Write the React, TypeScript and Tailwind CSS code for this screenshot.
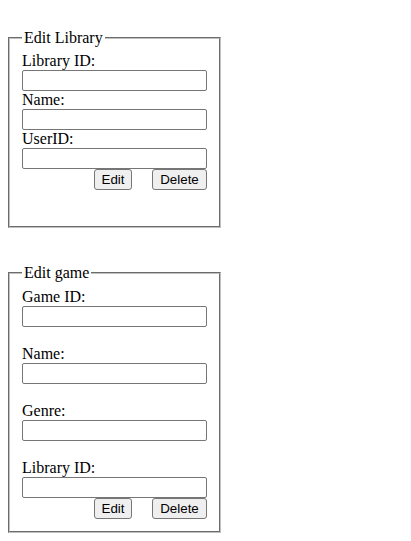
import { useState } from 'react'

type Field = { id: string; label: string }

const libraryFields: Field[] = [
  { id: 'libraryId', label: 'Library ID:' },
  { id: 'name', label: 'Name:' },
  { id: 'userId', label: 'UserID:' },
]

const gameFields: Field[] = [
  { id: 'gameId', label: 'Game ID:' },
  { id: 'gameName', label: 'Name:' },
  { id: 'genre', label: 'Genre:' },
  { id: 'gameLibraryId', label: 'Library ID:' },
]

function TextInput({ value, onChange }: { value: string; onChange: (v: string) => void }) {
  return (
    <input
      type="text"
      value={value}
      onChange={(e) => onChange(e.target.value)}
      className="block w-full h-[21px] px-[2px] border border-[#767676] rounded-[2px] bg-white text-[13.33px] outline-none"
    />
  )
}

function Buttons() {
  return (
    <div className="flex justify-end gap-[20px]">
      <button
        type="button"
        className="w-[38px] h-[21px] border border-[#767676] rounded-[3px] bg-[#efefef] text-[13.33px] leading-none text-black font-['Liberation_Sans',Arial,sans-serif]"
      >
        Edit
      </button>
      <button
        type="button"
        className="w-[55px] h-[21px] border border-[#767676] rounded-[3px] bg-[#efefef] text-[13.33px] leading-none text-black font-['Liberation_Sans',Arial,sans-serif]"
      >
        Delete
      </button>
    </div>
  )
}

export default function App() {
  const [values, setValues] = useState<Record<string, string>>({})
  const set = (id: string) => (v: string) => setValues((prev) => ({ ...prev, [id]: v }))

  return (
    <div className="min-h-[541px] bg-white pt-[29px] pl-[8px] text-black text-[16px] font-['Liberation_Serif','Times_New_Roman',serif]">
      <form onSubmit={(e) => e.preventDefault()}>
        <fieldset className="w-[213px] border-2 [border-style:groove] border-[#c0c0c0] px-[12px] pt-[5px] pb-[10px]">
          <legend className="px-[2px] leading-[18px]">Edit Library</legend>
          {libraryFields.map((f) => (
            <div key={f.id}>
              <label htmlFor={f.id} className="block h-[18px] leading-[18px]">
                {f.label}
              </label>
              <TextInput value={values[f.id] ?? ''} onChange={set(f.id)} />
            </div>
          ))}
          <Buttons />
          <div className="h-[26px]" />
        </fieldset>
      </form>

      <form onSubmit={(e) => e.preventDefault()} className="mt-[36px]">
        <fieldset className="w-[213px] border-2 [border-style:groove] border-[#c0c0c0] px-[12px] pt-[6px] pb-[12px]">
          <legend className="px-[2px] leading-[18px]">Edit game</legend>
          {gameFields.map((f, i) => (
            <div key={f.id} className={i > 0 ? 'mt-[18px]' : ''}>
              <label htmlFor={f.id} className="block h-[18px] leading-[18px]">
                {f.label}
              </label>
              <TextInput value={values[f.id] ?? ''} onChange={set(f.id)} />
            </div>
          ))}
          <Buttons />
        </fieldset>
      </form>
    </div>
  )
}
